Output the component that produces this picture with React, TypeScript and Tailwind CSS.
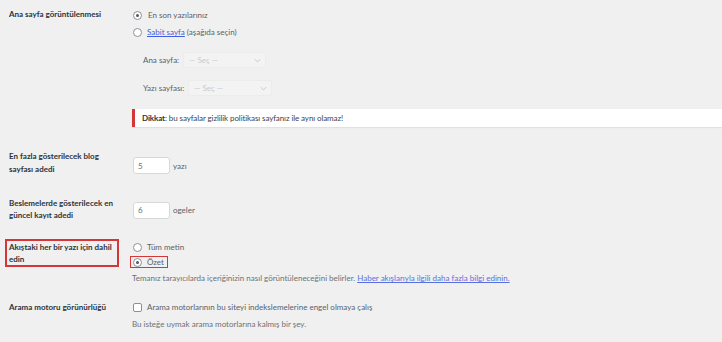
import React from "react";

const font = { fontFamily: "Lato, 'Noto Sans', sans-serif" };

function Radio({ checked }: { checked?: boolean }) {
  return (
    <span className="flex h-[9px] w-[9px] shrink-0 items-center justify-center rounded-full border border-[#8c8f94] bg-white">
      {checked && <span className="h-[3px] w-[3px] rounded-full bg-[#50575e]" />}
    </span>
  );
}

function Select({ width }: { width: string }) {
  return (
    <div
      className={`flex h-[16px] items-center justify-between rounded-[2px] border border-[#ececec] bg-[#f3f3f4] pl-[5px] pr-[4px] text-[#c9cacc] ${width}`}
    >
      <span>— Seç —</span>
      <svg width="7" height="5" viewBox="0 0 10 6" fill="none">
        <path d="M1 1l4 4 4-4" stroke="#c3c4c7" strokeWidth="1.3" />
      </svg>
    </div>
  );
}

function NumberInput({ value }: { value: string }) {
  return (
    <div className="flex h-[17px] w-[37px] items-center rounded-[3px] border border-[#d7d8da] bg-white pl-[4px] text-[#6b6f74]">
      {value}
    </div>
  );
}

export default function App() {
  return (
    <div
      className="h-[342px] w-[722px] overflow-hidden bg-[#f0f0f1] pt-[8px] text-[8px] leading-[12px] text-[#5a6066]"
      style={font}
    >
      {/* Ana sayfa görüntülenmesi */}
      <div className="flex">
        <div className="w-[132px] shrink-0 pl-[9px] font-bold text-[#2c3338]">Ana sayfa görüntülenmesi</div>
        <div className="flex-1">
          <div className="mt-[1px] flex h-[12px] items-center gap-[6px] pl-[1px]">
            <Radio checked />
            <span>En son yazılarınız</span>
          </div>
          <div className="mt-[5px] flex h-[12px] items-center gap-[5px] pl-[1px]">
            <Radio />
            <span>
              <span className="text-[#3f5fe0] underline">Sabit sayfa</span> (aşağıda seçin)
            </span>
          </div>
          <div className="mt-[14px] flex items-center pl-[11px]">
            <span className="w-[40px]">Ana sayfa:</span>
            <Select width="w-[83px]" />
          </div>
          <div className="mt-[12px] flex items-center pl-[11px]">
            <span className="w-[45px] overflow-hidden whitespace-nowrap">Yazı sayfası:</span>
            <Select width="w-[84px]" />
          </div>
          <div className="mt-[13px] flex h-[18px] items-center border-l-[3px] border-[#d63638] bg-white pl-[7px] text-[#3c434a] shadow-[0_1px_1px_rgba(0,0,0,0.06)]">
            <span className="tracking-[-0.1px]">
              <b className="text-[#2c3338]">Dikkat</b>: bu sayfalar gizlilik politikası sayfanız ile aynı olamaz!
            </span>
          </div>
        </div>
      </div>

      {/* En fazla gösterilecek */}
      <div className="mt-[23px] flex">
        <div className="w-[132px] shrink-0 pl-[9px] pr-[10px] font-bold leading-[13px] text-[#2c3338]">
          En fazla gösterilecek blog sayfası adedi
        </div>
        <div className="mt-[5px] flex flex-1 items-center gap-[3px] pl-[1px]">
          <NumberInput value="5" />
          <span>yazı</span>
        </div>
      </div>

      {/* Beslemelerde */}
      <div className="mt-[21px] flex">
        <div className="w-[132px] shrink-0 pl-[9px] pr-[10px] font-bold text-[#2c3338]">
          Beslemelerde gösterilecek en güncel kayıt adedi
        </div>
        <div className="mt-[2px] flex flex-1 items-center gap-[3px] pl-[1px]">
          <NumberInput value="6" />
          <span>ogeler</span>
        </div>
      </div>

      {/* Akıştaki */}
      <div className="mt-[18px] flex">
        <div className="w-[132px] shrink-0 pl-[5px]">
          <div className="w-[114px] border-2 border-[#d63638] px-[2px] py-[0px] font-bold text-[#2c3338]">
            Akıştaki her bir yazı için dahil edin
          </div>
        </div>
        <div className="flex-1">
          <div className="mt-[2px] flex h-[12px] items-center gap-[5px] pl-[1px]">
            <Radio />
            <span>Tüm metin</span>
          </div>
          <div className="mt-[3px] -ml-[2px] inline-flex h-[12px] items-center gap-[5px] border-[1.5px] border-[#d63638] pl-[2px] pr-[3px]">
            <Radio checked />
            <span>Özet</span>
          </div>
          <div className="mt-[4px] text-[#6b7076]">
            Temanız tarayıcılarda içeriğinizin nasıl görüntüleneceğini belirler.{" "}
            <span className="text-[#5a6fe0] underline">Haber akışlarıyla ilgili daha fazla bilgi edinin.</span>
          </div>
        </div>
      </div>

      {/* Arama motoru */}
      <div className="mt-[17px] flex">
        <div className="w-[132px] shrink-0 pl-[9px] font-bold text-[#2c3338]">Arama motoru görünürlüğü</div>
        <div className="flex-1">
          <div className="flex h-[12px] items-center gap-[5px] pl-[1px]">
            <span className="h-[9px] w-[9px] shrink-0 rounded-[2px] border border-[#8c8f94] bg-white" />
            <span>Arama motorlarının bu siteyi indekslemelerine engel olmaya çalış</span>
          </div>
          <div className="mt-[5px] text-[#6b7076]">Bu isteğe uymak arama motorlarına kalmış bir şey.</div>
        </div>
      </div>
    </div>
  );
}
